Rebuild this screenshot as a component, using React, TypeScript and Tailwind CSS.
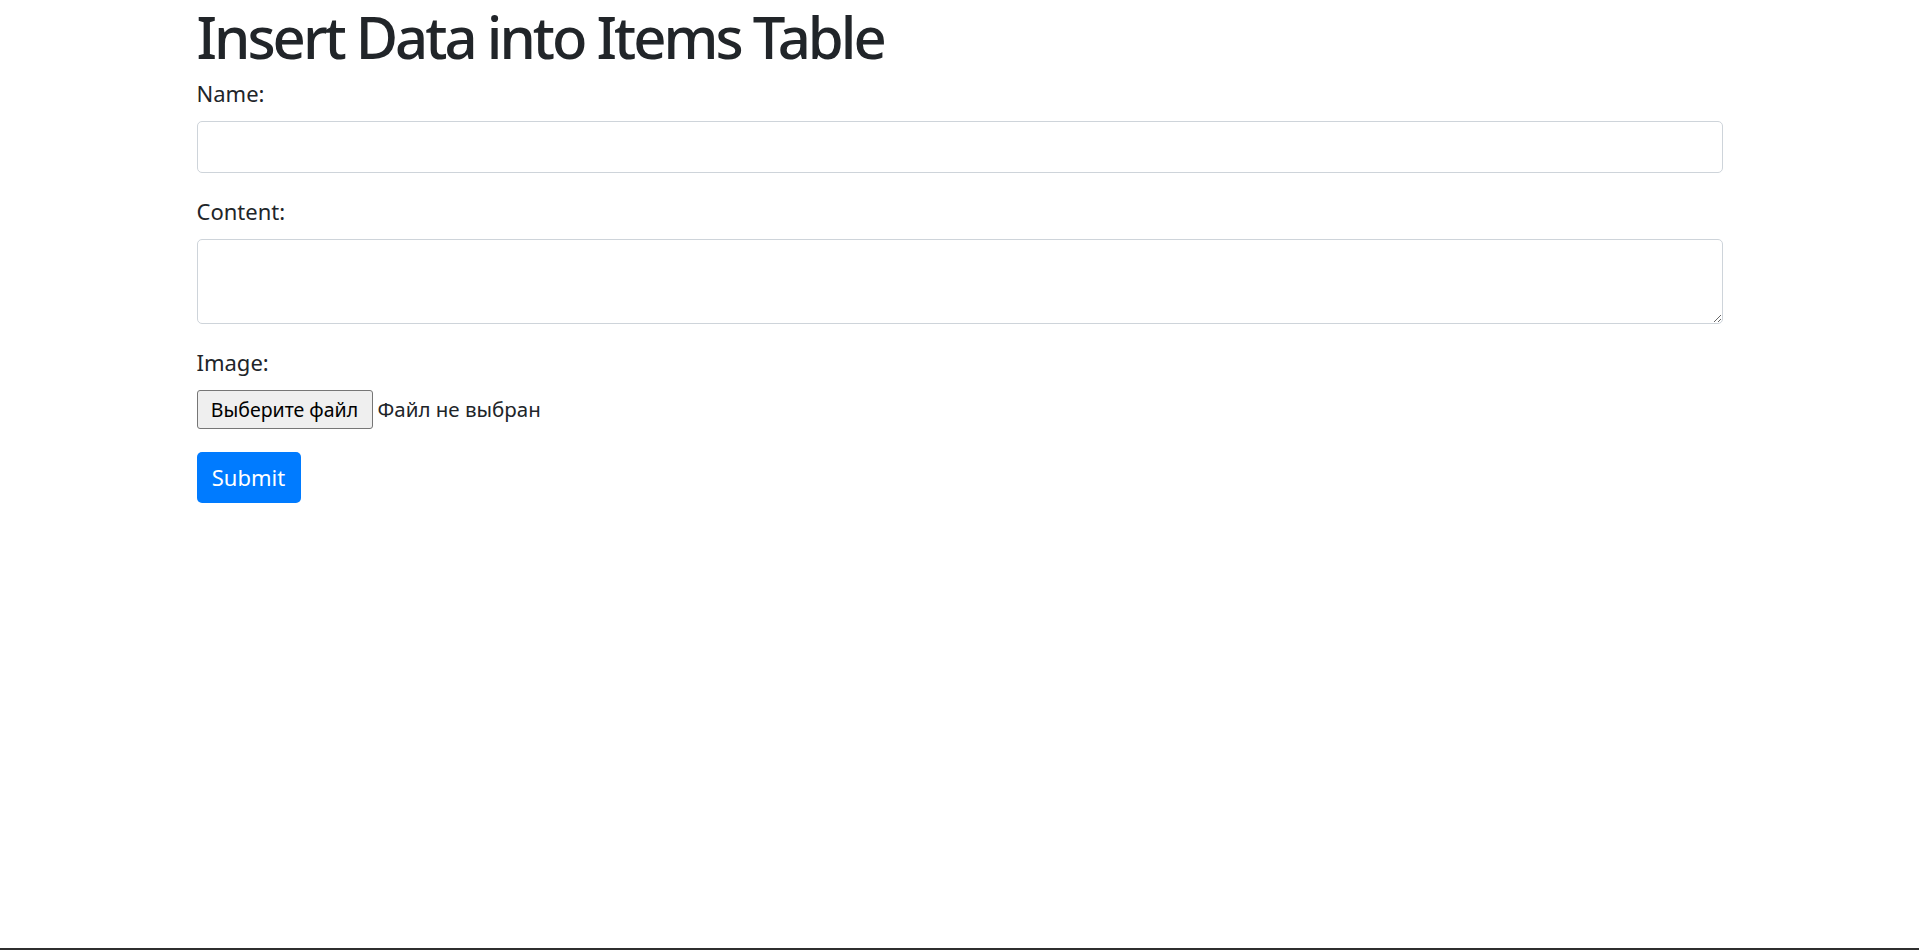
export default function App() {
  return (
    <div
      className="flex h-[950px] flex-col bg-white text-[#212529]"
      style={{ fontFamily: '"Noto Sans", sans-serif' }}
    >
      <div className="flex-1">
        <div className="mx-auto w-[1526px]">
          <h1 className="text-[58px] leading-[74px] font-medium tracking-[-3px]">
            Insert Data into Items Table
          </h1>

          <form className="mt-[3px]">
            <div className="mb-[22px]">
              <label className="mb-[11px] block text-[22px] leading-[33px]">Name:</label>
              <input
                type="text"
                className="block h-[52px] w-full rounded-[5px] border border-[#ced4da] px-[16px] text-[22px] outline-none"
              />
            </div>

            <div className="mb-[22px]">
              <label className="mb-[11px] block text-[22px] leading-[33px]">Content:</label>
              <textarea
                rows={2}
                className="block h-[85px] w-full rounded-[5px] border border-[#ced4da] px-[16px] py-[8px] text-[22px] outline-none"
              />
            </div>

            <div className="mb-[23px]">
              <label className="mb-[11px] block text-[22px] leading-[33px]">Image:</label>
              <div className="flex items-center">
                <button
                  type="button"
                  className="h-[39px] w-[176px] rounded-[3px] border border-[#767676] bg-[#efefef] text-[19.5px] text-black"
                >
                  Выберите файл
                </button>
                <span className="ml-[5px] text-[20.5px] text-[#212529]">Файл не выбран</span>
              </div>
            </div>

            <button
              type="submit"
              className="h-[51px] w-[104px] rounded-[5px] bg-[#007bff] text-[22px] text-white"
            >
              Submit
            </button>
          </form>
        </div>
      </div>
      <div className="h-[2px] bg-[#2f2f2f]" />
    </div>
  );
}
